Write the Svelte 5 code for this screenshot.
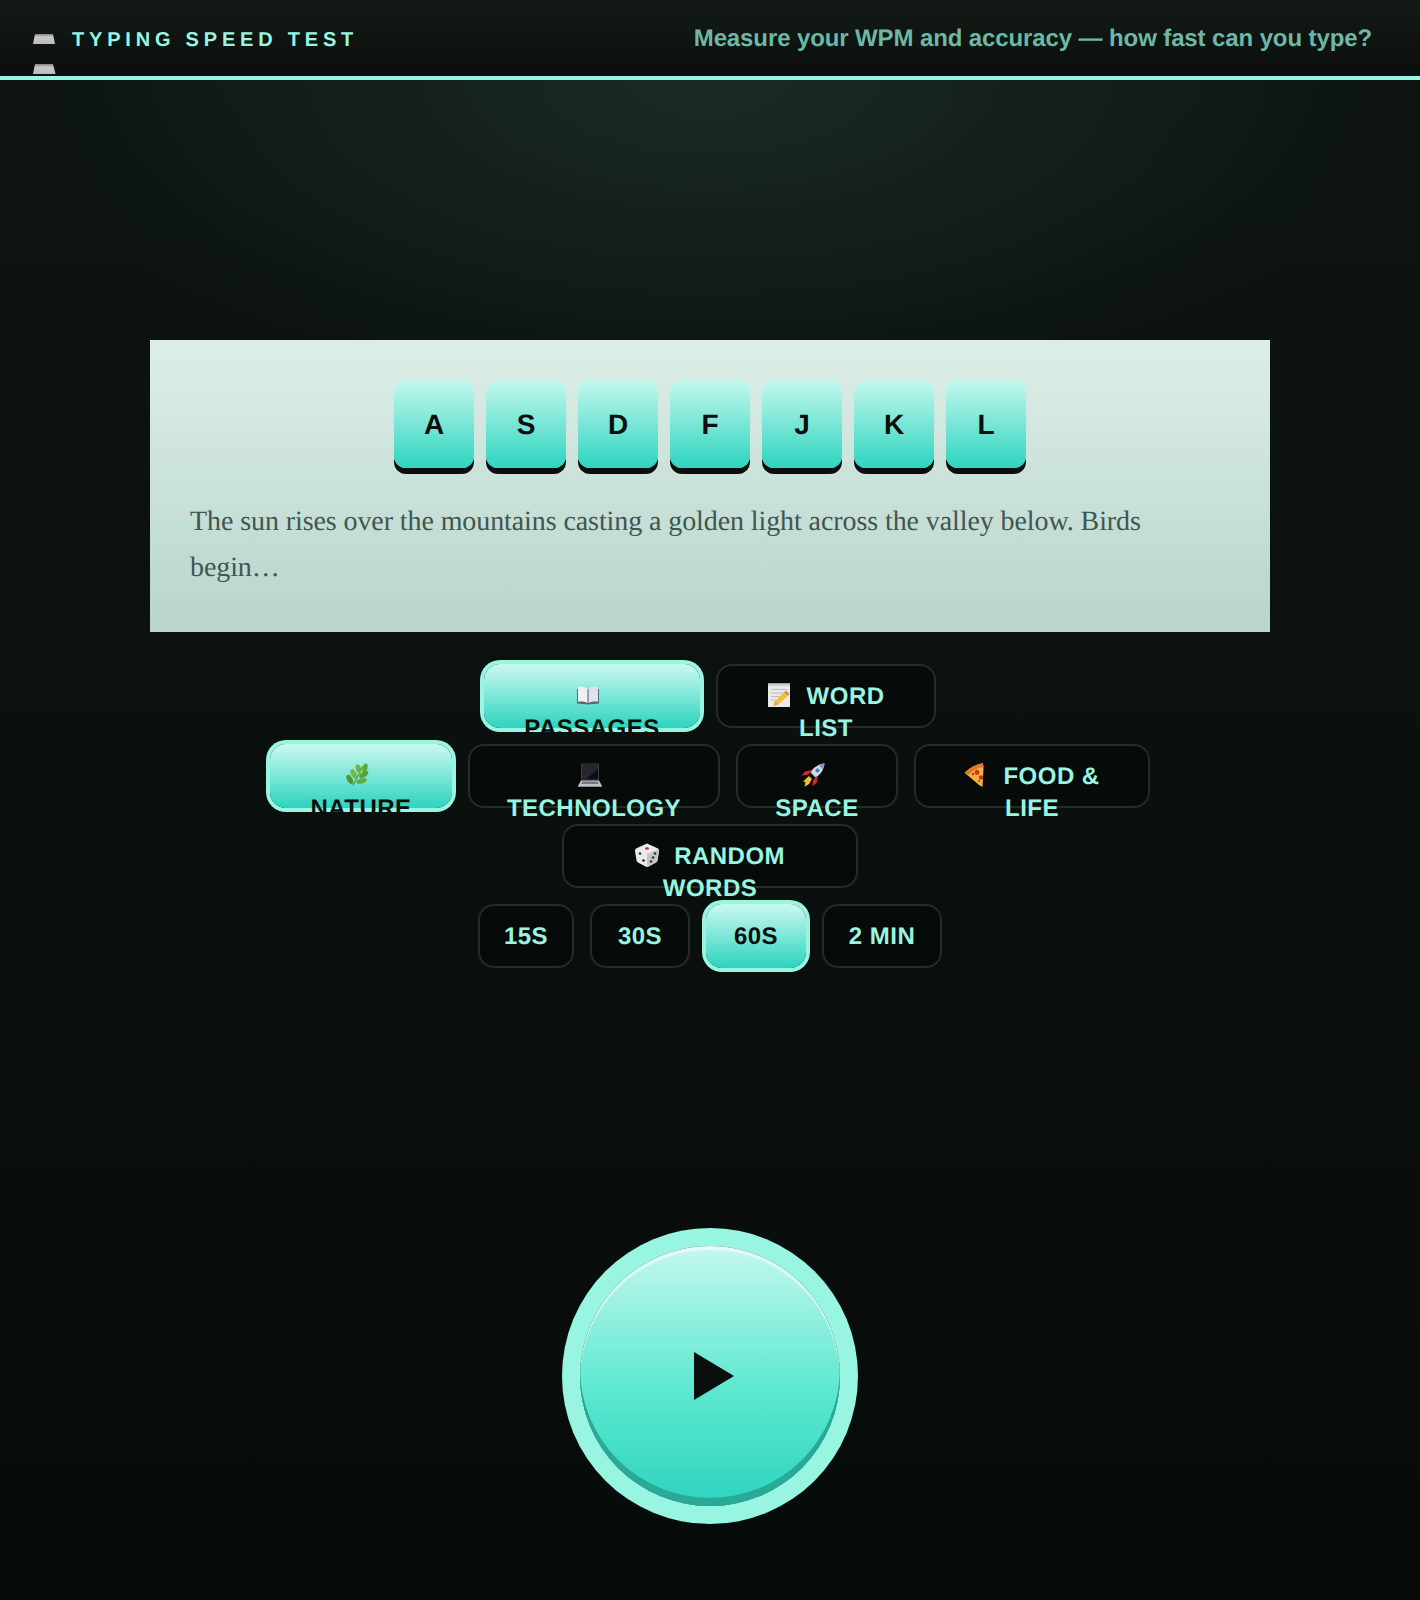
<script>
  const keys = ['A', 'S', 'D', 'F', 'J', 'K', 'L'];
  const modes = [
    { icon: 'book', label: 'PASSAGES', w: 216, on: true },
    { icon: 'memo', label: 'WORD LIST', w: 220 }
  ];
  const topics = [
    { icon: 'leaf', label: 'NATURE', w: 182, on: true },
    { icon: 'laptop', label: 'TECHNOLOGY', w: 252 },
    { icon: 'rocket', label: 'SPACE', w: 162 },
    { icon: 'pizza', label: 'FOOD & LIFE', w: 236 },
    { icon: 'dice', label: 'RANDOM WORDS', w: 296 }
  ];
  const times = [
    { label: '15S', w: 96 },
    { label: '30S', w: 100 },
    { label: '60S', w: 100, on: true },
    { label: '2 MIN', w: 120 }
  ];
</script>

{#snippet glyph(name)}
  <svg class="ic" width="24" height="24" viewBox="0 0 24 24" aria-hidden="true">
    {#if name === 'book'}
      <path d="M1 6 L12 7 L23 6 V20.5 L12 21.5 L1 20.5Z" fill="#56657c" />
      <path d="M2 4 C5.5 3.4 9.5 4 11.7 5.6 V20 C9.5 18.6 5.5 18 2 18.8Z" fill="#eef0f4" />
      <path d="M22 4 C18.5 3.4 14.5 4 12.3 5.6 V20 C14.5 18.6 18.5 18 22 18.8Z" fill="#dfe2e8" />
      <path d="M12 5.6 V20.5" stroke="#6b7585" stroke-width="0.8" />
    {:else if name === 'memo'}
      <rect x="1" y="0.5" width="22" height="23.5" fill="#eceae6" />
      <path d="M1 0.5 H23 V3 H1Z" fill="#cfcfcf" />
      <path d="M4 6.5 H20 M4 10 H18 M4 13.5 H13 M4 17 H9" stroke="#b4bac0" stroke-width="0.9" />
      <path d="M19 7.5 L22.5 11 L11.5 21.5 L6.5 23 L8 18Z" fill="#f2c230" />
      <path d="M19 7.5 L22.5 11 L20.8 12.7 L17.3 9.2Z" fill="#e2847c" />
      <path d="M8 18 L6.5 23 L11.5 21.5Z" fill="#d9a35a" />
    {:else if name === 'leaf'}
      <path d="M8 22.5 C11 17 14 11 18 3" stroke="#4c8a2c" stroke-width="1" fill="none" />
      <ellipse cx="20" cy="5" rx="2.4" ry="4.6" transform="rotate(15 20 5)" fill="#5fa838" />
      <ellipse cx="13.5" cy="5.6" rx="2.5" ry="4.6" transform="rotate(-20 13.5 5.6)" fill="#6fb640" />
      <ellipse cx="18.8" cy="11.5" rx="2.6" ry="5" transform="rotate(58 18.8 11.5)" fill="#579e33" />
      <ellipse cx="8.8" cy="11" rx="2.6" ry="5" transform="rotate(-28 8.8 11)" fill="#74b945" />
      <ellipse cx="16.5" cy="18" rx="2.6" ry="5.4" transform="rotate(76 16.5 18)" fill="#63ab3b" />
      <ellipse cx="4.8" cy="16.5" rx="2.6" ry="5" transform="rotate(-30 4.8 16.5)" fill="#4f962e" />
    {:else if name === 'laptop'}
      <rect x="3" y="0.5" width="18" height="17" rx="1" fill="#3c3d42" />
      <rect x="4" y="1.5" width="16" height="15" fill="#0e0e12" />
      <path d="M4 1.5 H20 V6 L8 16.5 H4Z" fill="#26262c" />
      <path d="M3 17.5 H21 L24 23 H0Z" fill="#c0c3c9" />
      <path d="M4.5 18.5 H19.5 L20.8 21 H3.2Z" fill="#75787f" />
      <path d="M0 23 H24 V24 H0Z" fill="#8a8d94" />
    {:else if name === 'rocket'}
      <path d="M23.5 0.5 C18 1 12.5 4 9.5 9.5 L14.5 14.5 C20 11.5 23 6 23.5 0.5Z" fill="#cfd8e6" />
      <path d="M23.5 0.5 C21.5 0.7 19.5 1.3 17.7 2.2 L21.8 6.3 C22.7 4.5 23.3 2.5 23.5 0.5Z" fill="#7d9cc7" />
      <circle cx="16.5" cy="7.5" r="2" fill="#4c79b5" />
      <path d="M10.5 7 L4 8.5 L0.5 12.5 L6 12 L9 10Z" fill="#d22b25" />
      <path d="M17 13.5 L15.5 20 L11.5 23.5 L12 18 L14 15Z" fill="#d22b25" />
      <path d="M8 13 L11 16 L8 21 L3.5 23.8 L4.5 19 L2 18.5Z" fill="#f3c22e" />
    {:else if name === 'pizza'}
      <path d="M1 10 C6 5 12 1.5 18.5 0.5 L19.5 5 L18.5 24 L15 22Z" fill="#f5b13d" />
      <path d="M0.5 9.5 C6 4.5 12 1 18.8 0 L19.8 4 C13 5 8 8 3.5 12.5Z" fill="#dd7a2a" />
      <circle cx="13" cy="9.5" r="2.4" fill="#c8342a" />
      <circle cx="9" cy="11" r="1.3" fill="#c8342a" />
      <circle cx="17" cy="14.5" r="2.2" fill="#c8342a" />
      <circle cx="15" cy="18" r="1.1" fill="#c8342a" />
    {:else if name === 'dice'}
      <path d="M12 0.5 L23 5.5 Q24 6 24 8 L22.5 17.5 Q22 19 21 19.5 L12.5 24 Q12 24 11.5 24 L3 19.5 Q2 19 1.5 17.5 L0 8 Q0 6 1 5.5Z" fill="#eceaea" />
      <path d="M12 11 L23.6 6 Q24 7 24 8 L22.5 17.5 Q22 19 21 19.5 L12.5 24 Q12 24 12 23Z" fill="#c8c5c5" />
      <ellipse cx="12" cy="5.5" rx="2" ry="1.2" fill="#d0332b" />
      <circle cx="5" cy="10.5" r="1.2" fill="#222" />
      <circle cx="8.5" cy="17.5" r="1.3" fill="#222" />
      <circle cx="16" cy="18.5" r="1.3" fill="#333" />
      <circle cx="18" cy="14.5" r="1.3" fill="#333" />
      <circle cx="20" cy="10.5" r="1.3" fill="#333" />
    {/if}
  </svg>
{/snippet}

<div class="page">
  <header class="bar">
    <div class="brand">
      <span class="logo">
        <svg width="24" height="40" viewBox="0 0 24 40" aria-hidden="true">
          <defs>
            <linearGradient id="slab" x1="0" y1="0" x2="0" y2="1">
              <stop offset="0" stop-color="#7f8180" />
              <stop offset="0.3" stop-color="#c8c8c8" />
              <stop offset="1" stop-color="#bcbcbc" />
            </linearGradient>
          </defs>
          <path d="M3 0 H21 L23 10 H1Z" fill="url(#slab)" />
          <path d="M3 30 H21 L23.5 40 H1Z" fill="url(#slab)" />
        </svg>
      </span>
      <span class="title">TYPING SPEED TEST</span>
    </div>
    <p class="tag">Measure your WPM and accuracy — how fast can you type?</p>
  </header>

  <main class="stage">
    <section class="card">
      <div class="keys">
        {#each keys as k}
          <div class="key">{k}</div>
        {/each}
      </div>
      <p class="passage">The sun rises over the mountains casting a golden light across the valley below. Birds begin…</p>
    </section>

    <div class="controls">
      <div class="group">
        {#each modes as m}
          <button class="pill" class:on={m.on} style="width:{m.w}px">{@render glyph(m.icon)} {m.label}</button>
        {/each}
      </div>
      <div class="group">
        {#each topics as m}
          <button class="pill" class:on={m.on} style="width:{m.w}px">{@render glyph(m.icon)} {m.label}</button>
        {/each}
      </div>
      <div class="group">
        {#each times as m}
          <button class="pill time" class:on={m.on} style="width:{m.w}px">{m.label}</button>
        {/each}
      </div>
    </div>

    <button class="play" aria-label="Start">
      <svg width="40" height="48" viewBox="0 0 40 48"><polygon points="0,0 40,24 0,48" fill="#0a0f0d" /></svg>
    </button>
  </main>
</div>

<style>
  :global(body) {
    margin: 0;
    background: #0a0f0d;
  }
  .page {
    height: 1600px;
    display: flex;
    flex-direction: column;
    font-family: "Liberation Sans", Arial, sans-serif;
    text-rendering: geometricPrecision;
    background:
      radial-gradient(ellipse 700px 320px at 50% 80px, #1c2a24 0%, rgba(26, 40, 34, 0) 100%),
      linear-gradient(180deg, #0d1411 0%, #070c0a 100%);
  }
  .bar {
    height: 76px;
    box-sizing: content-box;
    border-bottom: 4px solid #98f5e1;
    padding: 0 48px 0 32px;
    display: flex;
    align-items: center;
    justify-content: space-between;
    background: linear-gradient(180deg, #141a16 0%, #0a0f0d 100%);
  }
  .brand {
    display: flex;
    align-items: center;
    gap: 16px;
  }
  .logo {
    width: 24px;
    height: 10px;
    padding-top: 1px;
    line-height: 0;
  }
  .title {
    padding-top: 4px;
    font-size: 20px;
    font-weight: 700;
    letter-spacing: 4.8px;
    color: #98f5e1;
  }
  .tag {
    margin: 0;
    padding-top: 2px;
    font-size: 24px;
    font-weight: 700;
    letter-spacing: -0.11px;
    color: #6cb8a6;
  }
  .stage {
    flex: 1;
    display: flex;
    flex-direction: column;
    align-items: center;
    padding-top: 260px;
  }
  .card {
    width: 1120px;
    height: 292px;
    box-sizing: border-box;
    padding: 40px;
    background: linear-gradient(180deg, #dcefe7 0%, #b8d4cc 100%);
  }
  .keys {
    display: flex;
    justify-content: center;
    gap: 12px;
  }
  .key {
    width: 80px;
    height: 88px;
    box-sizing: border-box;
    padding-top: 2px;
    display: flex;
    align-items: center;
    justify-content: center;
    border-radius: 12px;
    font-size: 28px;
    font-weight: 700;
    color: #0a0f0d;
    background: linear-gradient(180deg, #c5f8ee 0%, #2dd4bf 100%);
    box-shadow: 0 6px 0 #0a0f0d;
  }
  .passage {
    margin: 31px 0 0;
    font-family: "Liberation Serif", "Times New Roman", serif;
    font-size: 28px;
    letter-spacing: -0.09px;
    line-height: 46px;
    color: #40564f;
  }
  .controls {
    margin-top: 32px;
    display: flex;
    flex-direction: column;
    align-items: center;
    gap: 16px;
  }
  .group {
    display: flex;
    flex-wrap: wrap;
    justify-content: center;
    gap: 16px;
    width: 900px;
  }
  .pill {
    height: 64px;
    box-sizing: border-box;
    padding: 15.4px 24px 14px;
    border: 2px solid #222d2a;
    border-radius: 16px;
    background: #060a09;
    color: #98f5e1;
    font-family: inherit;
    font-size: 24px;
    font-weight: 700;
    letter-spacing: 0.48px;
    line-height: 31.2px;
    text-align: center;
    display: block;
    text-rendering: geometricPrecision;
  }
  .pill.time {
    padding-left: 0;
    padding-right: 0;
    white-space: nowrap;
  }
  .pill.on {
    border-color: transparent;
    background: linear-gradient(180deg, #cbf9f0 0%, #2dd4bf 100%) border-box;
    color: #0a0f0d;
    box-shadow: 0 0 0 4px #98f5e1;
  }
  .ic {
    margin-right: 8px;
    vertical-align: -3px;
  }
  .play {
    margin-top: 278px;
    width: 260px;
    height: 260px;
    padding: 0 0 0 8px;
    border: 0;
    border-radius: 50%;
    display: flex;
    align-items: center;
    justify-content: center;
    background: linear-gradient(180deg, #c5f8ee 0%, #5ee8d0 55%, #2dd4bf 100%);
    box-shadow:
      0 0 0 18px #98f5e1,
      inset 0 -8px 0 #2aa898,
      inset 0 4px 0 rgba(255, 255, 255, 0.5);
  }
</style>
